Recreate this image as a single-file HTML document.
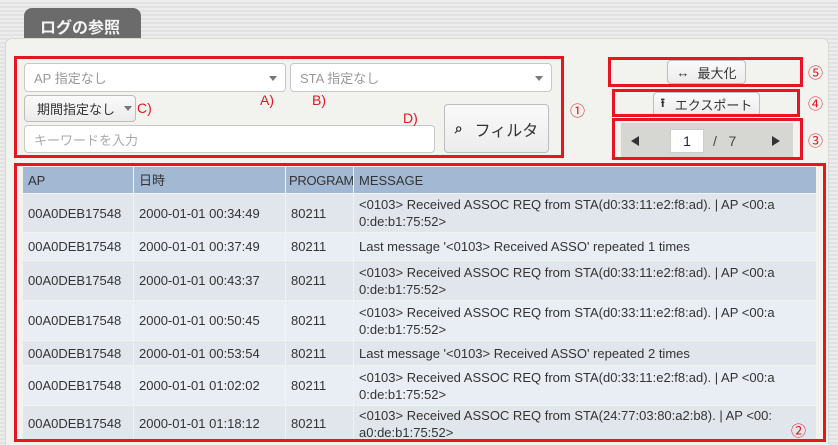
<!DOCTYPE html>
<html style="width:838px;height:445px;overflow:hidden"><head><meta charset="utf-8"><style>
*{box-sizing:border-box;margin:0;padding:0}
body{width:838px;height:445px;overflow:hidden;background:repeating-linear-gradient(#ececec 0 2px,#e2e2e2 2px 4px);font-family:"Liberation Sans","Noto Sans CJK JP",sans-serif;position:relative;color:#333}
.a{position:absolute}
.tab{left:24px;top:8px;width:117px;height:31px;background:#6b6b6b;border-radius:8px 8px 0 0;color:#f4f4f4;font-weight:bold;font-size:16px;padding:6px 0 0 16px}
.panel{left:5px;top:38px;width:824px;height:407px;background:#f2f2ee;border:1px solid #d8d8d4;border-bottom:none;border-radius:7px 7px 0 0}
.red{border:3px solid #e8141e;z-index:5}
.in{background:#fff;border:1px solid #c8c8c8;border-radius:4px;font-size:13px;color:#999;padding:0 9px;display:flex;align-items:center}
.btn{background:linear-gradient(#fafafa,#ececec);border:1px solid #bdbdbd;border-radius:4px;font-size:13px;color:#333;display:flex;align-items:center;justify-content:center}
.tri{width:0;height:0;border-left:4px solid transparent;border-right:4px solid transparent;border-top:5px solid #777}
.rl{color:#e8141e;font-size:14px;z-index:6}
table{border-collapse:collapse;font-size:13px;color:#333;table-layout:fixed}
td,th{border:1px solid #f2f2ee;padding:0 0 0 5px;text-align:left;font-weight:normal;vertical-align:middle;line-height:17px;overflow:hidden;white-space:nowrap}
th{background:#a3b8d3;height:27px}
tr.o td{background:#e1e5ec}
tr.e td{background:#e9edf4}
</style></head><body>
<div class="a tab">ログの参照</div>
<div class="a panel"></div>
<div class="a red" style="left:14px;top:56px;width:550px;height:102px"></div>
<div class="a in" style="left:24px;top:63px;width:262px;height:29px">AP 指定なし<div class="tri a" style="right:8px;top:12px"></div></div>
<div class="a in" style="left:290px;top:63px;width:262px;height:29px">STA 指定なし<div class="tri a" style="right:8px;top:12px"></div></div>
<div class="a btn" style="left:24px;top:95px;width:112px;height:27px;justify-content:flex-start;padding-left:12px">期間指定なし<div class="tri" style="margin-left:9px"></div></div>
<div class="a rl" style="left:137px;top:100px">C)</div>
<div class="a rl" style="left:260px;top:92px">A)</div>
<div class="a rl" style="left:312px;top:92px">B)</div>
<div class="a rl" style="left:403px;top:110px">D)</div>
<div class="a in" style="left:24px;top:125px;width:411px;height:28px;color:#aaa">キーワードを入力</div>
<div class="a btn" style="left:444px;top:104px;width:105px;height:49px;font-size:16px"><span style="font-size:14px;margin-right:12px;font-weight:bold">&#x2315;</span>フィルタ</div>
<div class="a rl" style="left:570px;top:100px;font-size:15px">①</div>
<div class="a red" style="left:608px;top:57px;width:195px;height:30px"></div>
<div class="a btn" style="left:667px;top:60px;width:79px;height:24px"><span style="font-size:13px;margin-right:8px;font-weight:bold">↔</span>最大化</div>
<div class="a rl" style="left:808px;top:62px;font-size:15px">⑤</div>
<div class="a red" style="left:612px;top:89px;width:188px;height:28px"></div>
<div class="a btn" style="left:653px;top:92px;width:107px;height:25px"><span style="font-size:12px;margin-right:10px;font-weight:bold">⭱</span>エクスポート</div>
<div class="a rl" style="left:808px;top:93px;font-size:15px">④</div>
<div class="a red" style="left:612px;top:118px;width:191px;height:42px"></div>
<div class="a" style="left:621px;top:123px;width:172px;height:35px;background:#d6d6d2"></div>
<div class="a" style="left:631px;top:136px;border-top:5px solid transparent;border-bottom:5px solid transparent;border-right:8px solid #333"></div>
<div class="a" style="left:670px;top:129px;width:34px;height:24px;background:#fff;border:1px solid #ccc;font-size:14px;text-align:center;line-height:22px;color:#225">1</div>
<div class="a" style="left:713px;top:133px;font-size:14px;color:#444">/&nbsp;&nbsp;&nbsp;7</div>
<div class="a" style="left:772px;top:136px;border-top:5px solid transparent;border-bottom:5px solid transparent;border-left:8px solid #333"></div>
<div class="a rl" style="left:808px;top:130px;font-size:15px">③</div>
<div class="a red" style="left:14px;top:163px;width:812px;height:279px"></div>
<table class="a" style="left:22px;top:166px;width:794px">
<colgroup><col style="width:111px"><col style="width:152px"><col style="width:68px"><col style="width:463px"></colgroup>
<tr><th>AP</th><th>日時</th><th style="padding-left:3px;letter-spacing:-0.3px">PROGRAM</th><th>MESSAGE</th></tr>
<tr class="o" style="height:39px"><td>00A0DEB17548</td><td>2000-01-01 00:34:49</td><td>80211</td><td>&lt;0103&gt; Received ASSOC REQ from STA(d0:33:11:e2:f8:ad). | AP &lt;00:a<br>0:de:b1:75:52&gt;</td></tr>
<tr class="e" style="height:28px"><td>00A0DEB17548</td><td>2000-01-01 00:37:49</td><td>80211</td><td>Last message '&lt;0103&gt; Received ASSO' repeated 1 times</td></tr>
<tr class="o" style="height:40px"><td>00A0DEB17548</td><td>2000-01-01 00:43:37</td><td>80211</td><td>&lt;0103&gt; Received ASSOC REQ from STA(d0:33:11:e2:f8:ad). | AP &lt;00:a<br>0:de:b1:75:52&gt;</td></tr>
<tr class="e" style="height:40px"><td>00A0DEB17548</td><td>2000-01-01 00:50:45</td><td>80211</td><td>&lt;0103&gt; Received ASSOC REQ from STA(d0:33:11:e2:f8:ad). | AP &lt;00:a<br>0:de:b1:75:52&gt;</td></tr>
<tr class="o" style="height:25px"><td>00A0DEB17548</td><td>2000-01-01 00:53:54</td><td>80211</td><td>Last message '&lt;0103&gt; Received ASSO' repeated 2 times</td></tr>
<tr class="e" style="height:40px"><td>00A0DEB17548</td><td>2000-01-01 01:02:02</td><td>80211</td><td>&lt;0103&gt; Received ASSOC REQ from STA(d0:33:11:e2:f8:ad). | AP &lt;00:a<br>0:de:b1:75:52&gt;</td></tr>
<tr class="o" style="height:36px"><td>00A0DEB17548</td><td>2000-01-01 01:18:12</td><td>80211</td><td>&lt;0103&gt; Received ASSOC REQ from STA(24:77:03:80:a2:b8). | AP &lt;00:<br>a0:de:b1:75:52&gt;</td></tr>
</table>
<div class="a rl" style="left:791px;top:420px;font-size:15px">②</div>
</body></html>
